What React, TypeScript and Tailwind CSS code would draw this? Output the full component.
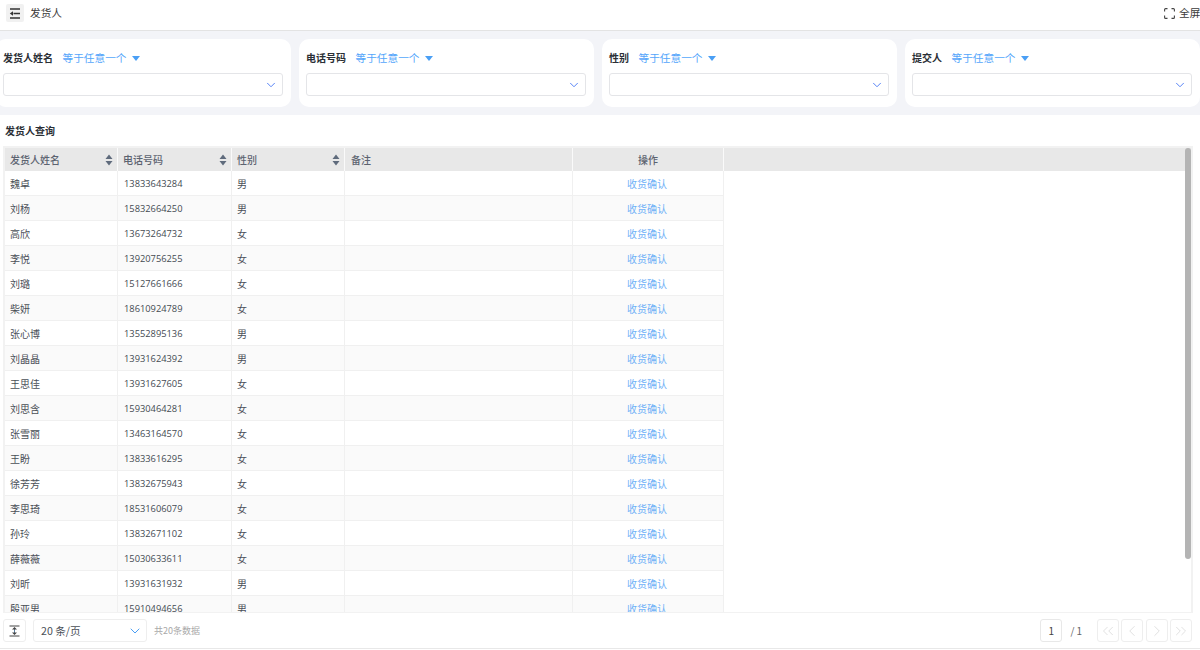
import { ChevronDown, ChevronLeft, ChevronRight, ChevronsLeft, ChevronsRight } from "lucide-react";

const font = "font-['Noto_Sans_CJK_SC','Noto_Sans',sans-serif]";

const rows = [
  ["魏卓", "13833643284", "男"],
  ["刘杨", "15832664250", "男"],
  ["高欣", "13673264732", "女"],
  ["李悦", "13920756255", "女"],
  ["刘璐", "15127661666", "女"],
  ["柴妍", "18610924789", "女"],
  ["张心博", "13552895136", "男"],
  ["刘晶晶", "13931624392", "男"],
  ["王思佳", "13931627605", "女"],
  ["刘思含", "15930464281", "女"],
  ["张雪丽", "13463164570", "女"],
  ["王盼", "13833616295", "女"],
  ["徐芳芳", "13832675943", "女"],
  ["李思琦", "18531606079", "女"],
  ["孙玲", "13832671102", "女"],
  ["薛薇薇", "15030633611", "女"],
  ["刘昕", "13931631932", "男"],
  ["殷亚男", "15910494656", "男"],
];

const filters = ["发货人姓名", "电话号码", "性别", "提交人"];

const SortIcon = () => (
  <svg width="8" height="12" viewBox="0 0 8 12" className="shrink-0">
    <path d="M4 0.5 L7.5 5 H0.5 Z M4 11.5 L0.5 7 H7.5 Z" fill="#5f6b7c" />
  </svg>
);

const FilterCard = ({ label }: { label: string }) => (
  <div className="bg-white rounded-[10px] h-[68px] pl-[7px] pr-[8px] pt-[11px]">
    <div className="flex items-center h-4 text-[10.67px] leading-4">
      <span className="text-[10px] font-semibold text-[#2b2f36] mr-[9.5px]">{label}</span>
      <span className="text-[#55a6fb]">等于任意一个</span>
      <svg width="8" height="5" viewBox="0 0 8 5" className="ml-[6px]">
        <path d="M0 0 H8 L4 5 Z" fill="#4a9ff5" />
      </svg>
    </div>
    <div className="mt-[7px] h-[23px] border border-[#e4e5e8] rounded-[3px] flex items-center justify-end pr-[4px]">
      <ChevronDown size={14} strokeWidth={1.6} className="text-[#4b7bf5]" />
    </div>
  </div>
);

const HeadCell = ({ label, w }: { label: string; w: string }) => (
  <div className={`${w} shrink-0 bg-[#e8e8e8] border-r border-[#fafafa] flex items-center justify-between pl-[5px] pr-[4px] text-[#5c6370]`}>
    <span className="font-medium pb-[1px]">{label}</span>
    <SortIcon />
  </div>
);

const PageBtn = ({ children }: { children: React.ReactNode }) => (
  <div className="w-[22px] h-[23px] border border-[#eeeeee] rounded-[3px] flex items-center justify-center text-[#dedede]">
    {children}
  </div>
);

export default function App() {
  return (
    <div className={`${font} w-[1200px] h-[650px] overflow-hidden bg-white text-[10px] flex flex-col`}>
      <header className="h-[31px] shrink-0 bg-white border-b border-[#e3e3e3] flex items-center justify-between pl-[6px] pb-[4px]">
        <div className="flex items-center">
          <div className="w-[18px] h-[18px] bg-[#f1f1f1] rounded-[2px] flex items-center justify-center">
            <svg width="12" height="11" viewBox="0 0 12 11" fill="none" stroke="#333" strokeWidth="1.3">
              <path d="M1 1 H11 M4.5 5.5 H11 M1 10 H11" />
              <path d="M4 3.2 L0.8 5.5 L4 7.8 Z" fill="#333" stroke="none" />
            </svg>
          </div>
          <span className="ml-[6px] text-[10.67px] text-[#3a3a3a]">发货人</span>
        </div>
        <div className="flex items-center text-[10.67px] text-[#3a3a3a]">
          <svg width="11" height="11" viewBox="0 0 11 11" fill="none" stroke="#444" strokeWidth="1.1">
            <path d="M3.5 .6 H1.6 Q.6 .6 .6 1.6 V3.5 M7.5 .6 H9.4 Q10.4 .6 10.4 1.6 V3.5 M3.5 10.4 H1.6 Q.6 10.4 .6 9.4 V7.5 M7.5 10.4 H9.4 Q10.4 10.4 10.4 9.4 V7.5" />
          </svg>
          <span className="ml-[4px] w-[21px] whitespace-nowrap">全屏</span>
        </div>
      </header>

      <div className="h-[84px] shrink-0 bg-[#f3f4f8] pt-2">
        <div className="-ml-1 w-[1204px] grid grid-cols-4 gap-2">
          {filters.map((f) => (
            <FilterCard key={f} label={f} />
          ))}
        </div>
      </div>

      <main className="flex-1 min-h-0 bg-white rounded-tr-[8px] flex flex-col">
        <div className="h-[31px] shrink-0 flex items-center pl-[5px] pb-[1px] text-[10px] font-semibold text-[#2b2f36]">发货人查询</div>
        <div className="mx-[3px] w-[1190px] h-[467px] shrink-0 relative overflow-hidden border-t-2 border-l-2 border-r-2 border-b border-[#f2f2f2]">
          <div className="flex h-[23px]">
            <HeadCell label="发货人姓名" w="w-[113px]" />
            <HeadCell label="电话号码" w="w-[114px]" />
            <HeadCell label="性别" w="w-[113px]" />
            <div className="w-[228px] shrink-0 bg-[#e8e8e8] border-r border-[#fafafa] flex items-center pl-[6px] pb-[1px] text-[#5c6370] font-medium">备注</div>
            <div className="w-[151px] shrink-0 bg-[#e8e8e8] border-r border-[#fafafa] flex items-center justify-center pb-[1px] text-[#5c6370] font-medium">操作</div>
            <div className="flex-1 bg-[#e8e8e8]" />
          </div>
          {rows.map((r, i) => (
            <div key={r[1]} className={`flex h-[25px] w-[719px] border-b border-[#f0f0f0] ${i % 2 ? "bg-[#fafafa]" : "bg-white"}`}>
              <div className="w-[113px] shrink-0 border-r border-[#f0f0f0] flex items-center pl-[5px] text-[#4a4f57]">{r[0]}</div>
              <div className="w-[114px] shrink-0 border-r border-[#f0f0f0] flex items-center pl-[6px] pt-[1px] text-[#444a52] font-['Open_Sans',sans-serif] text-[9.3px]">{r[1]}</div>
              <div className="w-[113px] shrink-0 border-r border-[#f0f0f0] flex items-center pl-[5px] text-[#4a4f57]">{r[2]}</div>
              <div className="w-[228px] shrink-0 border-r border-[#f0f0f0]" />
              <div className="w-[151px] shrink-0 border-r border-[#f0f0f0] flex items-center justify-center pr-[2px] text-[#6fb1f7]">收货确认</div>
            </div>
          ))}
          <div className="absolute right-0 top-0 w-[6px] h-[411px] rounded-[3px] bg-[#b4b4b4]" />
        </div>
        <footer className="h-[36px] shrink-0 flex items-center pl-[3px] pr-[8px] border-b border-[#e8e8e8]">
          <div className="w-[23px] h-[23px] border border-[#eeeeee] rounded-[3px] flex items-center justify-center">
            <svg width="11" height="12" viewBox="0 0 11 12" fill="none" stroke="#444" strokeWidth="1">
              <path d="M0.5 1 H10.5 M0.5 11 H10.5" />
              <path d="M5.5 3.5 V8.5" stroke="#5b7f9e" />
              <path d="M3 4.5 L5.5 2 L8 4.5 Z M3 7.5 L5.5 10 L8 7.5 Z" fill="#444" stroke="none" />
            </svg>
          </div>
          <div className="ml-[7px] w-[114px] h-[23px] border border-[#eeeeee] rounded-[3px] flex items-center justify-between pl-[7px] pr-[3px] text-[10.67px] text-[#4a4f57]">
            <span>20 条/页</span>
            <ChevronDown size={16} strokeWidth={1.5} className="text-[#4a9ff5]" />
          </div>
          <span className="ml-[7px] text-[#a9a9a9] text-[9px]">共20条数据</span>
          <div className="ml-auto w-[22px] h-[23px] border border-[#e8e8e8] rounded-[3px] flex items-center justify-center text-[#444] text-[10px]">1</div>
          <span className="ml-2 mr-[15px] text-[#666] text-[10px]">/ 1</span>
          <div className="flex gap-[2.3px]">
            <PageBtn><ChevronsLeft size={18} strokeWidth={1.2} /></PageBtn>
            <PageBtn><ChevronLeft size={18} strokeWidth={1.2} /></PageBtn>
            <PageBtn><ChevronRight size={18} strokeWidth={1.2} /></PageBtn>
            <PageBtn><ChevronsRight size={18} strokeWidth={1.2} /></PageBtn>
          </div>
        </footer>
      </main>
    </div>
  );
}
